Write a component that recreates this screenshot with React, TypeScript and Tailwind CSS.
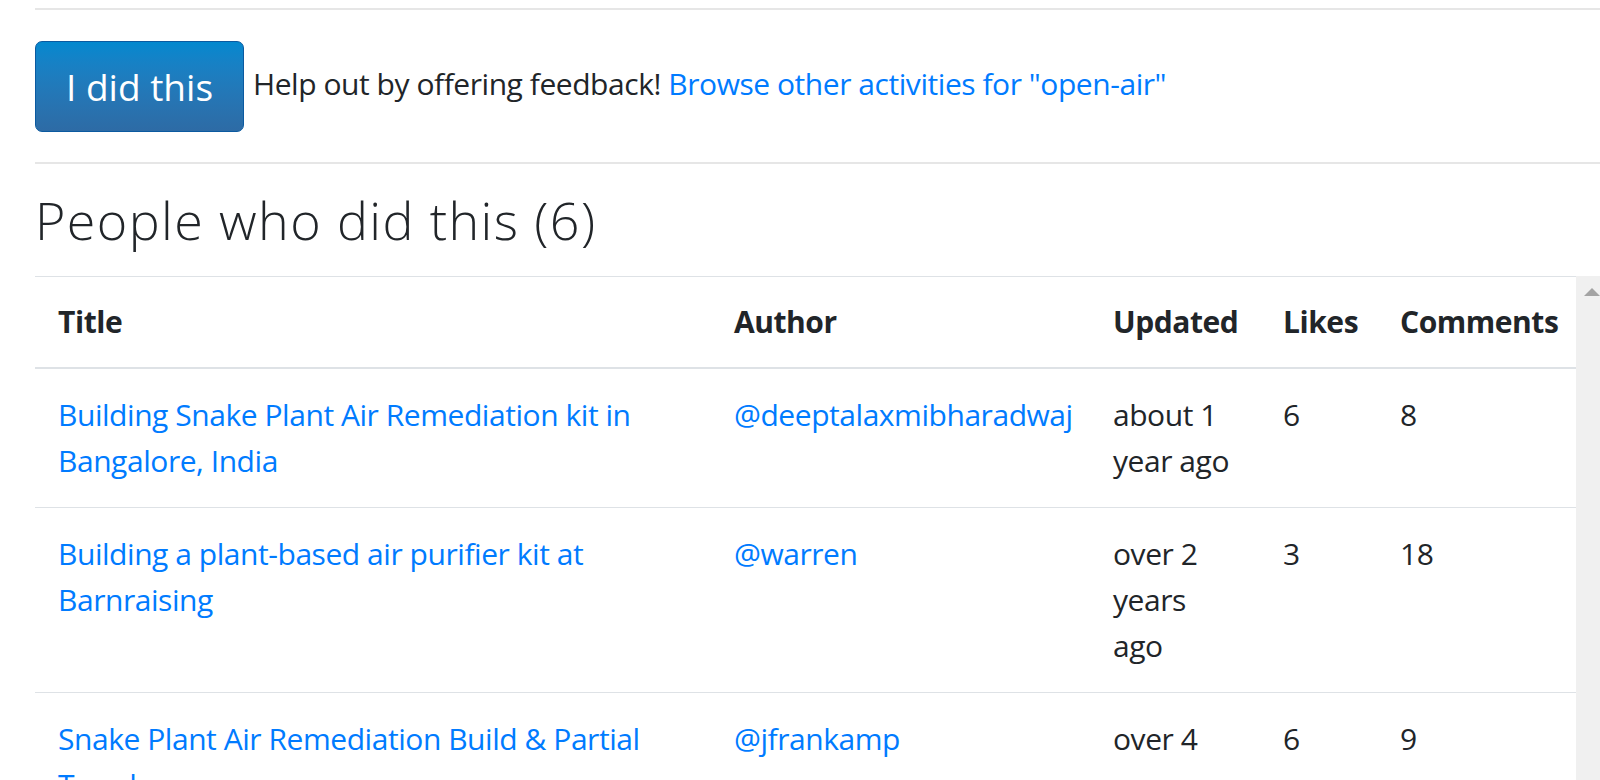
import React from "react";

const rows = [
  {
    title: "Building Snake Plant Air Remediation kit in Bangalore, India",
    author: "@deeptalaxmibharadwaj",
    updated: "about 1 year ago",
    likes: "6",
    comments: "8",
  },
  {
    title: "Building a plant-based air purifier kit at Barnraising",
    author: "@warren",
    updated: "over 2 years ago",
    likes: "3",
    comments: "18",
  },
  {
    title: "Snake Plant Air Remediation Build & Partial Teardown",
    author: "@jfrankamp",
    updated: "over 4 years ago",
    likes: "6",
    comments: "9",
  },
];

export default function App() {
  return (
    <div className="h-[780px] w-[1600px] overflow-hidden bg-white font-['Open_Sans','Noto_Sans',sans-serif] text-[30px] leading-[46px] tracking-[-0.45px] text-[#212529]">
      <div className="pl-[35px] pt-[8px]">
        <div className="h-[2px] bg-[#e6e6e6]" />
        <div className="flex items-center pt-[31px] pb-[30px]">
          <button className="rounded-[7px] border border-[#0b5aa0] bg-gradient-to-b from-[#0288cf] to-[#2d6ba5] px-[30px] py-[16px] text-[37px] leading-[57px] tracking-normal text-white">
            I did this
          </button>
          <div className="ml-[9px] -mt-[6px]">
            Help out by offering feedback!{" "}
            <a className="text-[#007bff]">Browse other activities for "open-air"</a>
          </div>
        </div>
        <div className="h-[2px] bg-[#e6e6e6]" />
        <h2 className="pt-[22px] pb-[22px] text-[52px] font-light leading-[68px] tracking-[1.4px] text-[#212529]">
          People who did this (6)
        </h2>
        <div className="flex">
          <table className="w-[1541px] table-fixed border-collapse">
            <colgroup>
              <col className="w-[676px]" />
              <col className="w-[379px]" />
              <col className="w-[170px]" />
              <col className="w-[117px]" />
              <col />
            </colgroup>
            <thead>
              <tr>
                <th className="border-t border-b-2 border-[#dee2e6] px-[23px] py-[22px] text-left align-bottom font-bold">Title</th>
                <th className="border-t border-b-2 border-[#dee2e6] px-[23px] py-[22px] text-left align-bottom font-bold">Author</th>
                <th className="border-t border-b-2 border-[#dee2e6] px-[23px] py-[22px] text-left align-bottom font-bold">Updated</th>
                <th className="border-t border-b-2 border-[#dee2e6] px-[23px] py-[22px] text-left align-bottom font-bold">Likes</th>
                <th className="border-t border-b-2 border-[#dee2e6] px-[23px] py-[22px] text-left align-bottom font-bold">Comments</th>
              </tr>
            </thead>
            <tbody>
              {rows.map((r, i) => (
                <tr key={i}>
                  <td className="border-t border-[#dee2e6] p-[23px] align-top">
                    <a className="text-[#007bff]">{r.title}</a>
                  </td>
                  <td className="border-t border-[#dee2e6] p-[23px] align-top">
                    <a className="text-[#007bff]">{r.author}</a>
                  </td>
                  <td className="border-t border-[#dee2e6] p-[23px] align-top">{r.updated}</td>
                  <td className="border-t border-[#dee2e6] p-[23px] align-top">{r.likes}</td>
                  <td className="border-t border-[#dee2e6] p-[23px] align-top">{r.comments}</td>
                </tr>
              ))}
            </tbody>
          </table>
          <div className="relative h-[600px] w-[24px] bg-[#f0f0f0]">
            <div className="absolute left-[8px] top-[12px] h-0 w-0 border-x-[8px] border-b-[8px] border-x-transparent border-b-[#a3a3a3]" />
          </div>
        </div>
      </div>
    </div>
  );
}
